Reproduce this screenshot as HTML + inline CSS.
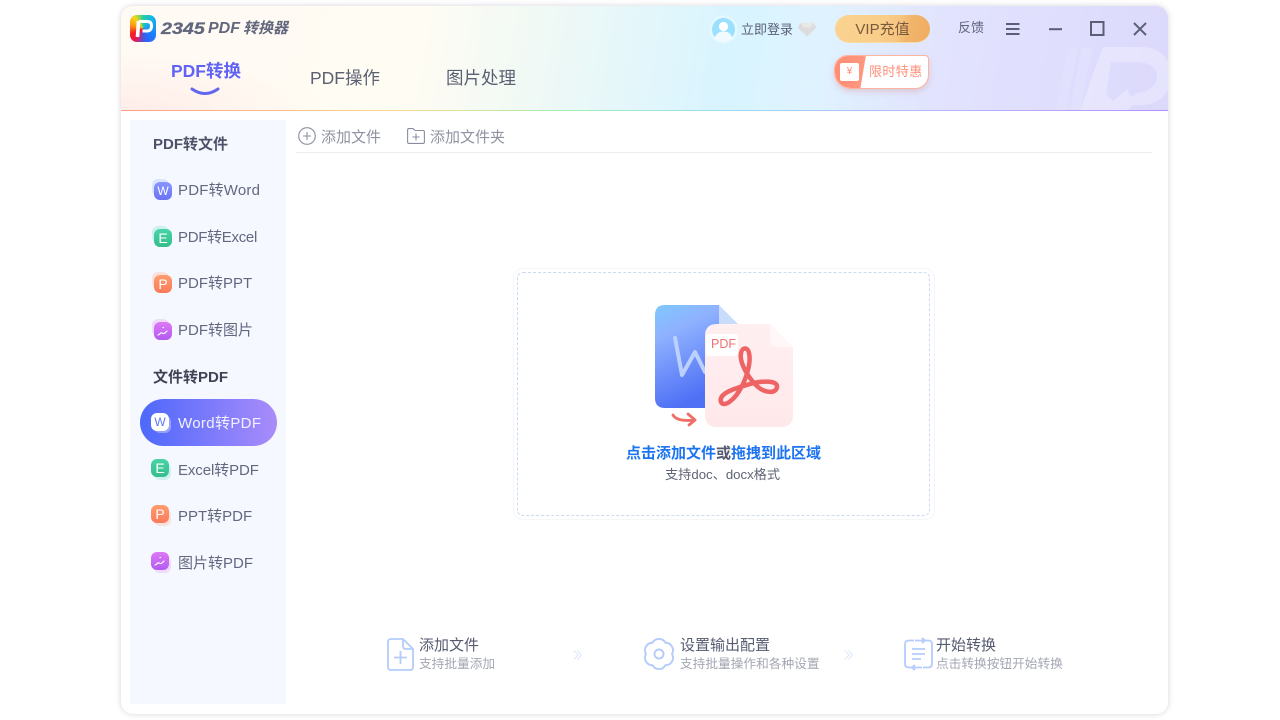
<!DOCTYPE html>
<html lang="zh-CN"><head><meta charset="utf-8"><title>2345 PDF转换器</title>
<style>
*{margin:0;padding:0;box-sizing:border-box}
html,body{width:1280px;height:720px;overflow:hidden;background:#fff}
body{position:relative;font-family:"Liberation Sans","Noto Sans CJK SC",sans-serif;color:#5a5f75}
.a{position:absolute;white-space:nowrap}
svg{position:absolute;overflow:visible}
#win{position:absolute;left:121px;top:6px;width:1047px;height:708px;background:#fff;border-radius:12px;box-shadow:0 0 6px rgba(40,40,70,.2)}
#hd{position:absolute;left:121px;top:6px;width:1047px;height:105px;border-radius:12px 12px 0 0;overflow:hidden;
background:radial-gradient(ellipse 200px 60px at 0 105px,rgba(255,228,226,.6),rgba(255,236,230,0)),linear-gradient(100deg,#fffaf4 0%,#fffcf3 28%,#f0f9f5 40%,#d8f4ff 58%,#dff3ff 66%,#e2e3fe 78%,#dcd9fc 100%)}
#ln{position:absolute;left:121px;top:110px;width:1047px;height:1px;background:linear-gradient(90deg,#ff9a8a,#ffd68a 25%,#a5f0b0 42%,#9adcf8 58%,#b4bcff 75%,#b88fff)}
.tab{font-size:17.5px;top:66px;line-height:24px;color:#5b6073}
.item{left:178px;font-size:15px;line-height:22px;color:#636880}
.grp{left:153px;font-size:15px;font-weight:700;line-height:20px;color:#4d5268}
.ic{position:absolute;width:18px;height:18px;border-radius:6px;color:#fff;font:400 14px/18px "Liberation Sans",sans-serif;text-align:center}
.ib{position:absolute;width:17px;height:17px;border-radius:6px;opacity:.32}
.t1{font-size:15px;line-height:20px;color:#565b70}
.t2{font-size:12.7px;line-height:18px;color:#a4a7b3}
.sq{position:absolute;left:3px;top:3px;width:12px;height:12px}
</style></head><body>
<div id="win"></div>
<div id="hd">
<svg style="left:-121px;top:-6px" width="1280" height="120" viewBox="0 0 1280 120"><g fill="#fff">
<path opacity=".1" d="M1068 48h10l-12 62h-10z"/><path opacity=".13" d="M1082 48h10l-12 62h-10z"/>
<path opacity=".28" fill-rule="evenodd" d="M1103 47h38c18 0 29 11 29 24v12c-3 14-14 22-30 22h-8l-4 6h-48zM1111 62h25c14 0 22 6 21 16-2 10-10 14-20 15l-6 4-4-8-14 12-7-6z"/>
</g></svg>
</div>
<div id="ln"></div>

<!-- logo -->
<div class="a" style="left:130px;top:15px;width:26px;height:27px;border-radius:7px;background:conic-gradient(from 0deg,#22d0a0,#16b4e8 12%,#1a7cff 35%,#3a5cf0 48%,#f0154a 60%,#f5211f 68%,#ff9a16 80%,#f2d816 90%,#22d0a0)"></div>
<svg style="left:130px;top:15px" width="26" height="27" viewBox="0 0 26 27"><path d="M8.500 6L7.500 22" stroke="#fff" stroke-width="3.600" fill="none"/><path d="M9 6.500h8.500q4 0 4 4.500t-4 5h-5" fill="none" stroke="#fff" stroke-width="3"/></svg>
<div class="a" style="left:161px;top:17px;font:italic 700 17px/24px 'Liberation Sans',sans-serif;color:#62677e;transform:scaleX(1.16);transform-origin:0 50%;-webkit-text-stroke:.3px #62677e">2345</div>
<div class="a" style="left:208px;top:17px;font:italic 700 16px/24px 'Liberation Sans',sans-serif;color:#62677e">PDF</div>
<div class="a" style="left:243px;top:17px;font:italic 700 15px/24px 'Liberation Sans','Noto Sans CJK SC',sans-serif;color:#62677e">转换器</div>

<div class="a tab" style="left:171px;top:59px;font-weight:700;color:#5f64f5">PDF转换</div>
<svg style="left:190px;top:87px" width="30" height="10"><path d="M2 2q13 9 26 0" fill="none" stroke="#6266f0" stroke-width="3" stroke-linecap="round"/></svg>
<div class="a tab" style="left:310px">PDF操作</div>
<div class="a tab" style="left:446px">图片处理</div>

<!-- user -->
<svg style="left:709px;top:15px" width="29" height="29" viewBox="0 0 29 29"><circle cx="14.500" cy="14.500" r="14" fill="#e4f8ff"/><circle cx="14.500" cy="14.500" r="11.500" fill="#9be0ff"/><circle cx="14.500" cy="11.500" r="4.600" fill="#fff"/><path d="M5.500 23c2-5 5-6.500 9-6.500s7 1.500 9 6.500c-2.500 2.500-5.500 3.500-9 3.500s-6.500-1-9-3.500z" fill="#f1fbff"/></svg>
<div class="a" style="left:741px;top:20px;font-size:13px;line-height:19px;color:#5a5f75">立即登录</div>
<svg style="left:797px;top:22px" width="20" height="15" viewBox="0 0 20 15"><path d="M4 .5h12l3.500 5L10 14.500.5 5.500z" fill="#dcdcdc"/><path d="M4 .5h12l-2 5H6z" fill="#e8e8e8"/></svg>
<div class="a" style="left:835px;top:15px;width:95px;height:28px;border-radius:14px;background:linear-gradient(105deg,#fbd391,#f9cd8a 50%,#f7c581 66%,#f1b56c 76%,#efac60);border-bottom:1.500px solid #f8dca0;font-size:15px;line-height:30px;text-align:center;color:#7b5a3c">VIP充值</div>
<div class="a" style="left:958px;top:19px;font-size:13px;line-height:18px;color:#5f647a">反馈</div>
<svg style="left:1006px;top:22px" width="14" height="14" stroke="#5a5f75" stroke-width="2" fill="none"><path d="M0 2h13.500M0 7h13.500M0 12h13.500"/></svg>
<svg style="left:1049px;top:28px" width="13" height="3"><path d="M0 1.200h13" stroke="#5a5f75" stroke-width="2"/></svg>
<svg style="left:1090px;top:21px" width="15" height="15"><rect x="1" y="1" width="12.500" height="13" fill="none" stroke="#5a5f75" stroke-width="2"/></svg>
<svg style="left:1133px;top:22px" width="14" height="14"><path d="M1 1l12 12M13 1L1 13" stroke="#5a5f75" stroke-width="2"/></svg>

<!-- coupon -->
<div class="a" style="left:834px;top:55px;width:95px;height:34px;border-radius:14px 4px 14px 17px;background:#fff;border:1px solid #ffb3a1;box-shadow:0 3px 6px rgba(210,110,90,.25);overflow:hidden">
<div style="position:absolute;left:-1px;top:-1px;width:32px;height:34px;background:linear-gradient(90deg,#ff8c72,#ff9880);clip-path:polygon(0 0,100% 0,82% 100%,0 100%)"></div>
<div style="position:absolute;left:5px;top:7px;width:19px;height:18px;background:#fff;border-radius:2px;font:10px/18px 'Liberation Sans',sans-serif;color:#ff8d74;text-align:center">¥</div>
<div style="position:absolute;left:34px;top:7px;font-size:13px;line-height:18px;color:#ff8f7b;letter-spacing:.4px">限时特惠</div></div>

<!-- sidebar -->
<div class="a" style="left:130px;top:120px;width:156px;height:584px;background:#f5f8ff"></div>
<div class="a grp" style="top:135px">PDF转文件</div>
<div class="a grp" style="top:368px;color:#3f4252">文件转PDF</div>

<div class="ib" style="left:152px;top:179px;background:#a9bdfb"></div><div class="ic" style="left:154px;top:182px;background:linear-gradient(#8895ff,#6a73f5);font-size:12px">W</div><div class="a item" style="top:180px;letter-spacing:.2px">PDF转Word</div>
<div class="ib" style="left:152px;top:226px;background:#7ee0cc"></div><div class="ic" style="left:154px;top:229px;background:linear-gradient(#47d4a8,#36bd8a)">E</div><div class="a item" style="top:227px;letter-spacing:-.3px">PDF转Excel</div>
<div class="ib" style="left:152px;top:272px;background:#ffb58f"></div><div class="ic" style="left:154px;top:275px;background:linear-gradient(#ff9d6e,#fb7a5c)">P</div><div class="a item" style="top:273px">PDF转PPT</div>
<div class="ib" style="left:152px;top:319px;background:#e2a0f7"></div><div class="ic" style="left:154px;top:322px;background:linear-gradient(#dd79f4,#b25af0)"><svg class="sq" viewBox="0 0 12 12" fill="none" stroke="#fff" stroke-width="1.200" stroke-linecap="round"><path d="M1 10c2 0 2-3 4-2s2 1 5-2M6 2.500h.5"/></svg></div><div class="a item" style="top:320px">PDF转图片</div>

<div class="a" style="left:140px;top:399px;width:137px;height:47px;border-radius:24px;background:linear-gradient(90deg,#4d68fb,#a98cfb)"></div>
<div class="ib" style="left:154px;top:416px;background:#fff;opacity:.35"></div><div class="ic" style="left:151px;top:413px;background:#fff;color:#5f78f8;font-size:12px">W</div><div class="a item" style="top:413px;color:#f2f0ff;letter-spacing:.35px">Word转PDF</div>
<div class="ib" style="left:154px;top:463px;background:#7ee0cc"></div><div class="ic" style="left:151px;top:459px;background:linear-gradient(#47d4a8,#36bd8a)">E</div><div class="a item" style="top:460px;letter-spacing:-.1px">Excel转PDF</div>
<div class="ib" style="left:154px;top:509px;background:#ffb58f"></div><div class="ic" style="left:151px;top:505px;background:linear-gradient(#ff9d6e,#fb7a5c)">P</div><div class="a item" style="top:506px">PPT转PDF</div>
<div class="ib" style="left:154px;top:556px;background:#e2a0f7"></div><div class="ic" style="left:151px;top:552px;background:linear-gradient(#dd79f4,#b25af0)"><svg class="sq" viewBox="0 0 12 12" fill="none" stroke="#fff" stroke-width="1.200" stroke-linecap="round"><path d="M1 10c2 0 2-3 4-2s2 1 5-2M6 2.500h.5"/></svg></div><div class="a item" style="top:553px">图片转PDF</div>

<!-- toolbar -->
<svg style="left:298px;top:127px" width="18" height="18" fill="none" stroke="#888da0" stroke-width="1.100"><circle cx="9" cy="9" r="8.300"/><path d="M9 5v8M5 9h8"/></svg>
<div class="a" style="left:321px;top:127px;font-size:15px;line-height:21px;color:#8f92a0">添加文件</div>
<svg style="left:407px;top:128px" width="18" height="17" fill="none" stroke="#888da0" stroke-width="1.100"><path d="M.6 3V2q0-1.400 1.400-1.400h4L8 2.500h8q1.400 0 1.400 1.400V14q0 1.400-1.400 1.400H2Q.6 15.400.6 14z"/><path d="M9 5.500v7M5.500 9h7"/></svg>
<div class="a" style="left:430px;top:127px;font-size:15px;line-height:21px;color:#8f92a0">添加文件夹</div>
<div class="a" style="left:296px;top:152px;width:856px;height:1px;background:#ececf0"></div>

<!-- drop zone -->
<div class="a" style="left:513px;top:268px;width:422px;height:252px;border:1px solid #f4f6fb;border-radius:10px"></div>
<div class="a" style="left:517px;top:272px;width:413px;height:244px;border:1px dashed #ccdaf1;border-radius:6px"></div>

<svg style="left:655px;top:305px" width="140" height="125" viewBox="0 0 140 125">
<defs><linearGradient id="bl" x1="0" y1="0" x2=".3" y2="1"><stop offset="0" stop-color="#7fc8ff"/><stop offset=".3" stop-color="#8fb2ff"/><stop offset="1" stop-color="#4f70f5"/></linearGradient>
<linearGradient id="pk" x1="0" y1="0" x2="0" y2="1"><stop offset="0" stop-color="#ffeff1"/><stop offset="1" stop-color="#ffe8ea"/></linearGradient></defs>
<path d="M10 0h54v103H10Q0 103 0 93V10Q0 0 10 0z" fill="url(#bl)"/>
<path d="M64 0l20 20H64z" fill="#c9dcfb"/>
<path d="M20 33l7 37 13-23 10 20" fill="none" stroke="#bcd0fd" stroke-width="4" stroke-linecap="round" stroke-linejoin="round"/>
<path d="M62 19h53l23 23v68q0 12-12 12H62q-12 0-12-12V31q0-12 12-12z" fill="url(#pk)"/>
<path d="M115 19l23 23h-15q-8 0-8-8z" fill="#fff7f8"/>
<rect x="51" y="29" width="32" height="22" rx="3" fill="#fff"/>
<text x="56" y="43" font-family="Liberation Sans" font-size="12.500" fill="#f0706f">PDF</text>
<path d="M66 97c3 6 14-2 21-16 6-12 9-25 7-33-1-6-7-6-8 0-2 10 8 26 17 34 7 6 18 7 19 0 1-6-12-7-27-3-14 4-32 9-29 18z" fill="none" stroke="#ee6464" stroke-width="4.500" stroke-linejoin="round"/>
<path d="M18 110q4 7 22 5" fill="none" stroke="#ef6e68" stroke-width="2.800" stroke-linecap="round"/>
<path d="M33 109l7 6-6 5" fill="none" stroke="#ef6e68" stroke-width="2.800" stroke-linecap="round" stroke-linejoin="round"/>
</svg>

<div class="a" style="left:626px;top:444px;font-size:15px;font-weight:700;line-height:20px;color:#1c74f2">点击添加文件<span style="color:#565b70">或</span>拖拽到此区域</div>
<div class="a" style="left:665px;top:466px;font-size:13.200px;line-height:18px;color:#5f6475">支持doc、docx格式</div>

<!-- steps -->
<svg style="left:387px;top:638px" width="27" height="33" fill="none" stroke="#b4cbfb" stroke-width="1.800"><path d="M4 1h12l10 10v18q0 3-3 3H4q-3 0-3-3V4q0-3 3-3z" stroke-linejoin="round"/><path d="M16 1v7q0 3 3 3h7M13.500 13v13M7 19.500h13"/></svg>
<div class="a t1" style="left:419px;top:636px">添加文件</div>
<div class="a t2" style="left:419px;top:655px">支持批量添加</div>
<svg style="left:573px;top:650px" width="10" height="10" fill="none" stroke="#dde7fb" stroke-width="1"><path d="M1 .5l4 4.500-4 4.500M4.500 .5l4 4.500-4 4.500"/></svg>

<svg style="left:643px;top:638px" width="32" height="32" viewBox="0 0 32 32" fill="none" stroke="#b4cbfb" stroke-width="1.900"><path d="M29 16A7.500 7.500 0 0 1 22.500 27.260A7.500 7.500 0 0 1 9.500 27.260A7.500 7.500 0 0 1 3 16A7.500 7.500 0 0 1 9.500 4.740A7.500 7.500 0 0 1 22.500 4.740A7.500 7.500 0 0 1 29 16z" stroke-linejoin="round"/><circle cx="16" cy="16" r="4.500"/></svg>
<div class="a t1" style="left:680px;top:636px">设置输出配置</div>
<div class="a t2" style="left:680px;top:655px">支持批量操作和各种设置</div>
<svg style="left:844px;top:650px" width="10" height="10" fill="none" stroke="#dde7fb" stroke-width="1"><path d="M1 .5l4 4.500-4 4.500M4.500 .5l4 4.500-4 4.500"/></svg>

<svg style="left:904px;top:638px" width="29" height="32" fill="none" stroke="#b4cbfb" stroke-width="1.800"><path d="M10 2.500H5Q1 2.500 1 6v20q0 3.500 4 3.500h4M19 29.500h5q4 0 4-3.500V6q0-3.500-4-3.500h-5M11 2.500h9M18 0l3 2.500-3 2.500M9 29.500h9M11 27l-3 2.500 3 2.500M8 11h13M8 16h13M8 21h9"/></svg>
<div class="a t1" style="left:936px;top:636px">开始转换</div>
<div class="a t2" style="left:936px;top:655px">点击转换按钮开始转换</div>
</body></html>
